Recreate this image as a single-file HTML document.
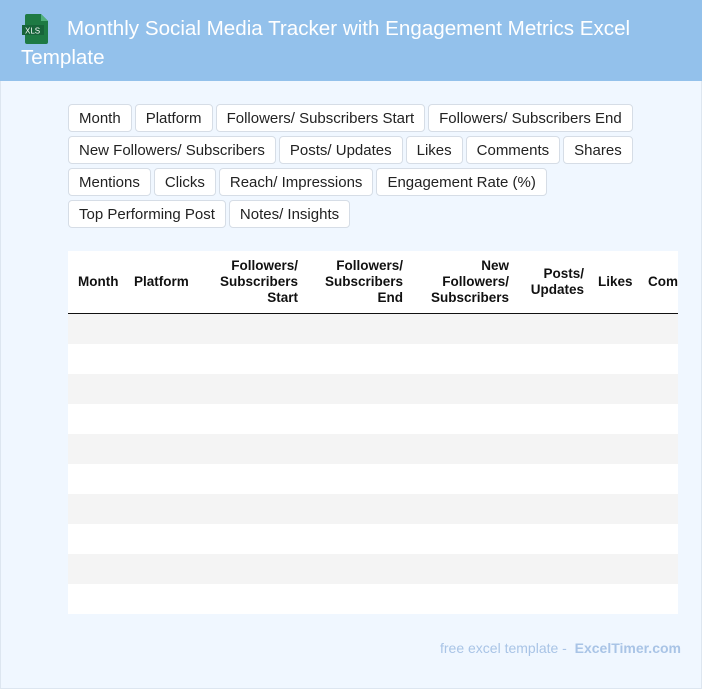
<!DOCTYPE html><html><head><style>
*{margin:0;padding:0;box-sizing:border-box}
body{width:702px;height:689px;background:#f0f7ff;font-family:"Liberation Sans",sans-serif;position:relative;overflow:hidden;box-shadow:inset 0 0 0 1px #dde6f0}
.hd{position:absolute;left:0;top:0;width:702px;height:81px;background:#93c1eb;color:#fff;font-size:20.6px;line-height:29px;padding:14px 20px 0 21px;text-indent:46px}
.ic{position:absolute;left:22px;top:14px;width:28px;height:30px}
.chips{position:absolute;left:68px;top:104px;width:600px}
.c{display:inline-block;height:28px;line-height:27px;border:1px solid #d6dde6;border-radius:4px;background:#fff;padding:0 10px;font-size:15px;color:#222;float:left;margin-right:3px}
.row{overflow:hidden;height:32px}
.tb{position:absolute;left:68px;top:251px;width:610px;height:363px;background:#fff;overflow:hidden}
.th{height:63px;border-bottom:1.5px solid #111;position:relative;font-weight:bold;font-size:13.5px;color:#111;line-height:16px}
.th div{position:absolute}
.r{height:30px}
.ft{position:absolute;right:21px;top:640px;font-size:14px;color:#a9c4e6}
</style></head><body>
<div class="hd">Monthly Social Media Tracker with Engagement Metrics Excel Template</div>
<svg class="ic" viewBox="0 0 28 30"><path d="M5 0h14l7 7v21a2 2 0 0 1-2 2H5a2 2 0 0 1-2-2V2a2 2 0 0 1 2-2z" fill="#1e7a44"/><path d="M19 0v7h7z" fill="#4fb07a"/><rect x="0" y="11" width="22" height="10" fill="#17643a"/><text x="3" y="19.5" font-size="8" fill="#fff" font-family="Liberation Sans">XLS</text></svg>
<div class="chips">
<div class="row"><span class="c">Month</span><span class="c">Platform</span><span class="c">Followers/ Subscribers Start</span><span class="c">Followers/ Subscribers End</span></div>
<div class="row"><span class="c">New Followers/ Subscribers</span><span class="c">Posts/ Updates</span><span class="c">Likes</span><span class="c">Comments</span><span class="c">Shares</span></div>
<div class="row"><span class="c">Mentions</span><span class="c">Clicks</span><span class="c">Reach/ Impressions</span><span class="c">Engagement Rate (%)</span></div>
<div class="row"><span class="c">Top Performing Post</span><span class="c">Notes/ Insights</span></div>
</div>
<div class="tb">
<div class="th">
<div style="left:10px;top:23px">Month</div>
<div style="left:66px;top:23px">Platform</div>
<div style="right:380px;top:7px;text-align:right">Followers/<br>Subscribers<br>Start</div>
<div style="right:275px;top:7px;text-align:right">Followers/<br>Subscribers<br>End</div>
<div style="right:169px;top:7px;text-align:right">New<br>Followers/<br>Subscribers</div>
<div style="right:94px;top:15px;text-align:right">Posts/<br>Updates</div>
<div style="left:530px;top:23px">Likes</div>
<div style="left:580px;top:23px;white-space:nowrap">Comments</div>
</div>
<div><div class="r" style="background:#f4f4f4"></div><div class="r" style="background:#fff"></div><div class="r" style="background:#f4f4f4"></div><div class="r" style="background:#fff"></div><div class="r" style="background:#f4f4f4"></div><div class="r" style="background:#fff"></div><div class="r" style="background:#f4f4f4"></div><div class="r" style="background:#fff"></div><div class="r" style="background:#f4f4f4"></div><div class="r" style="background:#fff"></div></div>
</div>
<div class="ft">free excel template - &nbsp;<b>ExcelTimer.com</b></div>
</body></html>
